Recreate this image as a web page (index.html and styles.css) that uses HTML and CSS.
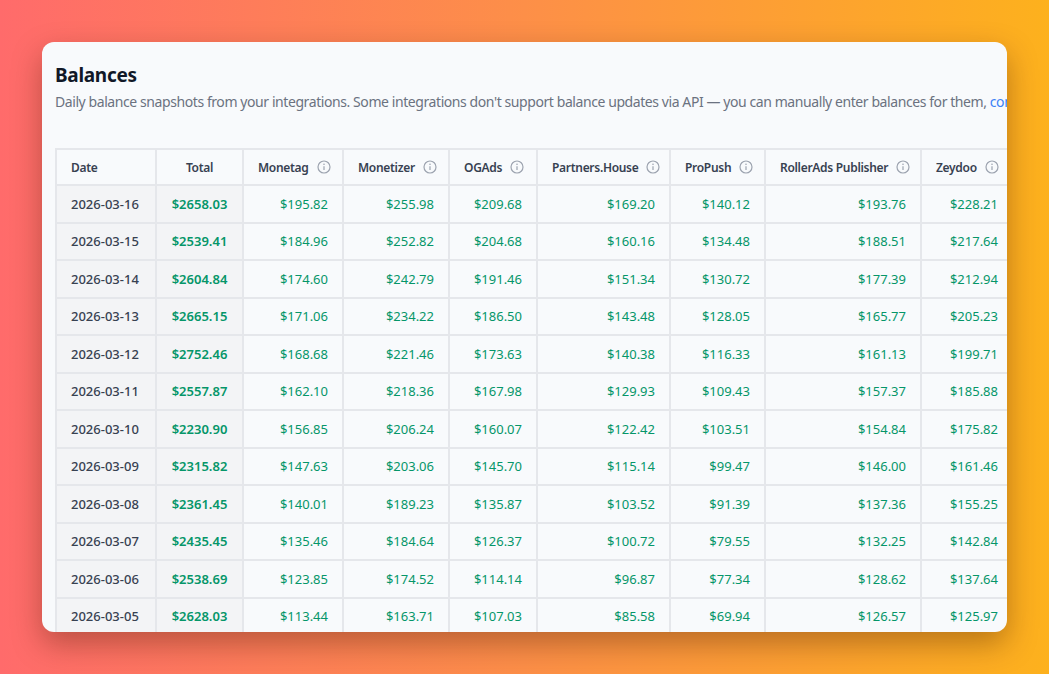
FILE: index.html
```html
<!DOCTYPE html>
<html lang="en">
<head>
<meta charset="utf-8">
<title>Balances</title>
<link rel="stylesheet" href="styles.css">
</head>
<body>
<div class="stage">
  <section class="card">
    <h1 class="title">Balances</h1>
    <p class="subtitle">Daily balance snapshots from your integrations. Some integrations don't support balance updates via API — you can manually enter balances for them, <a class="link" href="#">configure manual balances in settings</a>.</p>
    <div class="table-wrap">
      <table class="grid">
        <colgroup>
          <col class="c-date"><col class="c-total"><col class="c-monetag"><col class="c-monetizer"><col class="c-ogads"><col class="c-partners"><col class="c-propush"><col class="c-roller"><col class="c-zeydoo">
        </colgroup>
        <thead>
          <tr>
            <th class="h-date">Date</th>
            <th class="h-total">Total</th>
            <th><span class="hcell">Monetag<svg class="info" viewBox="0 0 14 14"><circle cx="7" cy="7" r="6"/><line x1="7" y1="6.3" x2="7" y2="10"/><circle class="dot" cx="7" cy="4.3" r="0.8"/></svg></span></th>
            <th><span class="hcell">Monetizer<svg class="info" viewBox="0 0 14 14"><circle cx="7" cy="7" r="6"/><line x1="7" y1="6.3" x2="7" y2="10"/><circle class="dot" cx="7" cy="4.3" r="0.8"/></svg></span></th>
            <th><span class="hcell">OGAds<svg class="info" viewBox="0 0 14 14"><circle cx="7" cy="7" r="6"/><line x1="7" y1="6.3" x2="7" y2="10"/><circle class="dot" cx="7" cy="4.3" r="0.8"/></svg></span></th>
            <th><span class="hcell">Partners.House<svg class="info" viewBox="0 0 14 14"><circle cx="7" cy="7" r="6"/><line x1="7" y1="6.3" x2="7" y2="10"/><circle class="dot" cx="7" cy="4.3" r="0.8"/></svg></span></th>
            <th><span class="hcell">ProPush<svg class="info" viewBox="0 0 14 14"><circle cx="7" cy="7" r="6"/><line x1="7" y1="6.3" x2="7" y2="10"/><circle class="dot" cx="7" cy="4.3" r="0.8"/></svg></span></th>
            <th><span class="hcell">RollerAds Publisher<svg class="info" viewBox="0 0 14 14"><circle cx="7" cy="7" r="6"/><line x1="7" y1="6.3" x2="7" y2="10"/><circle class="dot" cx="7" cy="4.3" r="0.8"/></svg></span></th>
            <th><span class="hcell">Zeydoo<svg class="info" viewBox="0 0 14 14"><circle cx="7" cy="7" r="6"/><line x1="7" y1="6.3" x2="7" y2="10"/><circle class="dot" cx="7" cy="4.3" r="0.8"/></svg></span></th>
          </tr>
        </thead>
        <tbody>
          <tr><td class="date">2026-03-16</td><td class="total">$2658.03</td><td>$195.82</td><td>$255.98</td><td>$209.68</td><td>$169.20</td><td>$140.12</td><td>$193.76</td><td>$228.21</td></tr>
          <tr><td class="date">2026-03-15</td><td class="total">$2539.41</td><td>$184.96</td><td>$252.82</td><td>$204.68</td><td>$160.16</td><td>$134.48</td><td>$188.51</td><td>$217.64</td></tr>
          <tr><td class="date">2026-03-14</td><td class="total">$2604.84</td><td>$174.60</td><td>$242.79</td><td>$191.46</td><td>$151.34</td><td>$130.72</td><td>$177.39</td><td>$212.94</td></tr>
          <tr><td class="date">2026-03-13</td><td class="total">$2665.15</td><td>$171.06</td><td>$234.22</td><td>$186.50</td><td>$143.48</td><td>$128.05</td><td>$165.77</td><td>$205.23</td></tr>
          <tr><td class="date">2026-03-12</td><td class="total">$2752.46</td><td>$168.68</td><td>$221.46</td><td>$173.63</td><td>$140.38</td><td>$116.33</td><td>$161.13</td><td>$199.71</td></tr>
          <tr><td class="date">2026-03-11</td><td class="total">$2557.87</td><td>$162.10</td><td>$218.36</td><td>$167.98</td><td>$129.93</td><td>$109.43</td><td>$157.37</td><td>$185.88</td></tr>
          <tr><td class="date">2026-03-10</td><td class="total">$2230.90</td><td>$156.85</td><td>$206.24</td><td>$160.07</td><td>$122.42</td><td>$103.51</td><td>$154.84</td><td>$175.82</td></tr>
          <tr><td class="date">2026-03-09</td><td class="total">$2315.82</td><td>$147.63</td><td>$203.06</td><td>$145.70</td><td>$115.14</td><td>$99.47</td><td>$146.00</td><td>$161.46</td></tr>
          <tr><td class="date">2026-03-08</td><td class="total">$2361.45</td><td>$140.01</td><td>$189.23</td><td>$135.87</td><td>$103.52</td><td>$91.39</td><td>$137.36</td><td>$155.25</td></tr>
          <tr><td class="date">2026-03-07</td><td class="total">$2435.45</td><td>$135.46</td><td>$184.64</td><td>$126.37</td><td>$100.72</td><td>$79.55</td><td>$132.25</td><td>$142.84</td></tr>
          <tr><td class="date">2026-03-06</td><td class="total">$2538.69</td><td>$123.85</td><td>$174.52</td><td>$114.14</td><td>$96.87</td><td>$77.34</td><td>$128.62</td><td>$137.64</td></tr>
          <tr><td class="date">2026-03-05</td><td class="total">$2628.03</td><td>$113.44</td><td>$163.71</td><td>$107.03</td><td>$85.58</td><td>$69.94</td><td>$126.57</td><td>$125.97</td></tr>
        </tbody>
      </table>
    </div>
  </section>
</div>
</body>
</html>
```

FILE: styles.css
```css
html, body {
  margin: 0;
  padding: 0;
}
body {
  width: 1049px;
  height: 674px;
  overflow: hidden;
  background: linear-gradient(90deg, #ff6b6b 0%, #fd8f48 50%, #fdb11d 100%);
  font-family: "Noto Sans", "Open Sans", Arial, sans-serif;
}
.stage {
  padding: 42px;
}
.card {
  box-sizing: border-box;
  width: 965px;
  height: 590px;
  background: #f8fafc;
  border-radius: 12px;
  box-shadow: 0 12px 30px rgba(60, 20, 0, 0.35);
  overflow: hidden;
  padding: 19px 0 0 13px;
}
.title {
  margin: 0;
  font-size: 19px;
  line-height: 28px;
  font-weight: 700;
  letter-spacing: -0.3px;
  color: #111827;
}
.subtitle {
  margin: 3px 0 0;
  font-size: 14px;
  line-height: 20px;
  letter-spacing: -0.42px;
  color: #6b7280;
  white-space: nowrap;
}
.link {
  color: #3b82f6;
  text-decoration: none;
}
.table-wrap {
  margin-top: 36px;
}
.grid {
  border-collapse: collapse;
  table-layout: fixed;
  width: 957px;
  font-size: 13px;
}
.c-date { width: 100px; }
.c-total { width: 87px; }
.c-monetag { width: 100px; }
.c-monetizer { width: 106px; }
.c-ogads { width: 88px; }
.c-partners { width: 133px; }
.c-propush { width: 95px; }
.c-roller { width: 156px; }
.c-zeydoo { width: 92px; }
.grid th,
.grid td {
  border: 2px solid #e5e7eb;
  padding: 0 14px;
  white-space: nowrap;
}
.grid thead tr {
  height: 36px;
}
.grid tbody tr {
  height: 37.5px;
}
.grid th {
  background: #f8fafc;
  color: #374151;
  font-size: 12px;
  font-weight: 600;
  letter-spacing: -0.3px;
  text-align: left;
}
.grid th.h-total {
  text-align: center;
}
.hcell {
  display: inline-flex;
  align-items: center;
  gap: 8px;
}
.info {
  width: 14px;
  height: 14px;
  fill: none;
  stroke: #9ca3af;
  stroke-width: 1.2;
}
.info .dot {
  fill: #9ca3af;
  stroke: none;
}
.grid td {
  color: #059669;
  text-align: right;
}
.grid td.date {
  background: #f3f4f6;
  color: #374151;
  font-weight: 500;
  text-align: left;
}
.grid td.total {
  background: #f3f4f6;
  font-weight: 600;
  text-align: center;
}
```
